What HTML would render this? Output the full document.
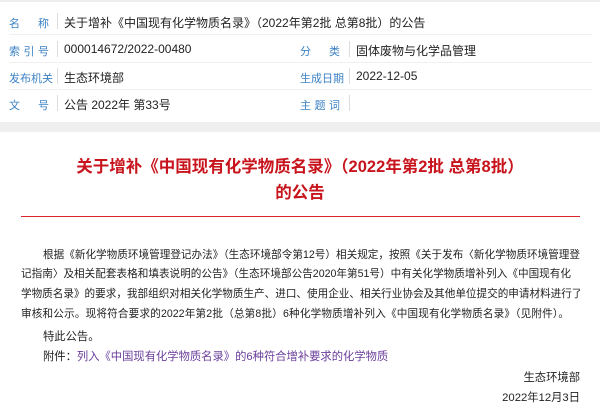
<!DOCTYPE html>
<html><head><meta charset="utf-8"><style>
body{margin:0;width:600px;height:410px;background:#fff;font-family:"Liberation Sans","Noto Sans CJK SC",sans-serif;font-size:12px;color:#222;overflow:hidden;position:relative}
.top{position:absolute;left:0;top:0;width:600px;height:2px;background:#eee}
.band{position:absolute;left:0;top:122px;width:600px;height:10px;background:#efefef}
.sep{position:absolute;left:9px;width:583px;height:1px;background:#f0f0f0}
.l{position:absolute;color:#3b82c4;width:40px;font-size:11px;white-space:nowrap;text-align-last:justify;text-align:justify}
.v{position:absolute;color:#222;white-space:nowrap}
.d{position:absolute;width:1px;height:16px;background:#ddd}
.t{position:absolute;left:0;width:600px;text-align:center;color:#c8141c;font-weight:bold;font-size:16.5px;white-space:nowrap}
.red{position:absolute;left:21px;top:216px;width:559px;height:1px;background:#d9262c}
.p{position:absolute;left:21px;width:559px;white-space:nowrap;line-height:20px;font-size:10.6px;text-align:justify;text-align-last:justify;overflow:hidden}
.q{font-size:11.3px}
</style></head><body>
<div class="top"></div>
<div class="l" style="left:9px;top:15px">名称</div><div class="d" style="left:57px;top:13px"></div><div class="v" style="left:64px;top:14px">关于增补《中国现有化学物质名录》（2022年第2批 总第8批）的公告</div>
<div class="sep" style="top:34px"></div>
<div class="l" style="left:9px;top:43px">索引号</div><div class="d" style="left:57px;top:41px"></div><div class="v" style="left:64px;top:42px">000014672/2022-00480</div>
<div class="l" style="left:300px;top:43px">分类</div><div class="d" style="left:349px;top:41px"></div><div class="v" style="left:356px;top:42px">固体废物与化学品管理</div>
<div class="sep" style="top:62px"></div>
<div class="l" style="left:9px;top:70px">发布机关</div><div class="d" style="left:57px;top:68px"></div><div class="v" style="left:64px;top:69px">生态环境部</div>
<div class="l" style="left:300px;top:70px">生成日期</div><div class="d" style="left:349px;top:68px"></div><div class="v" style="left:356px;top:69px">2022-12-05</div>
<div class="sep" style="top:89px"></div>
<div class="l" style="left:9px;top:97px">文号</div><div class="d" style="left:57px;top:95px"></div><div class="v" style="left:64px;top:96px">公告 2022年 第33号</div>
<div class="l" style="left:300px;top:97px">主题词</div><div class="d" style="left:349px;top:95px"></div>
<div class="band"></div>
<div class="t" style="top:153px">关于增补《中国现有化学物质名录》（2022年第2批 总第8批）</div>
<div class="t" style="top:179px">的公告</div>
<div class="red"></div>
<div class="p" style="top:245px;left:43px;width:537px">根据《新化学物质环境管理登记办法》（生态环境部令第12号）相关规定，按照《关于发布〈新化学物质环境管理登</div>
<div class="p" style="top:264px;width:550px">记指南〉及相关配套表格和填表说明的公告》（生态环境部公告2020年第51号）中有关化学物质增补列入《中国现有化</div>
<div class="p" style="top:284px">学物质名录》的要求，我部组织对相关化学物质生产、进口、使用企业、相关行业协会及其他单位提交的申请材料进行了</div>
<div class="p" style="top:304px;width:548px">审核和公示。现将符合要求的2022年第2批（总第8批）6种化学物质增补列入《中国现有化学物质名录》（见附件）。</div>
<div class="p q" style="top:327px;left:43px;text-align-last:left">特此公告。</div>
<div class="p q" style="top:347px;left:43px;text-align-last:left">附件：<span style="color:#6a3d9a">列入《中国现有化学物质名录》的6种符合增补要求的化学物质</span></div>
<div class="p q" style="top:368px;text-align:right;text-align-last:right">生态环境部</div>
<div class="p q" style="top:388px;text-align:right;text-align-last:right">2022年12月3日</div>
</body></html>
